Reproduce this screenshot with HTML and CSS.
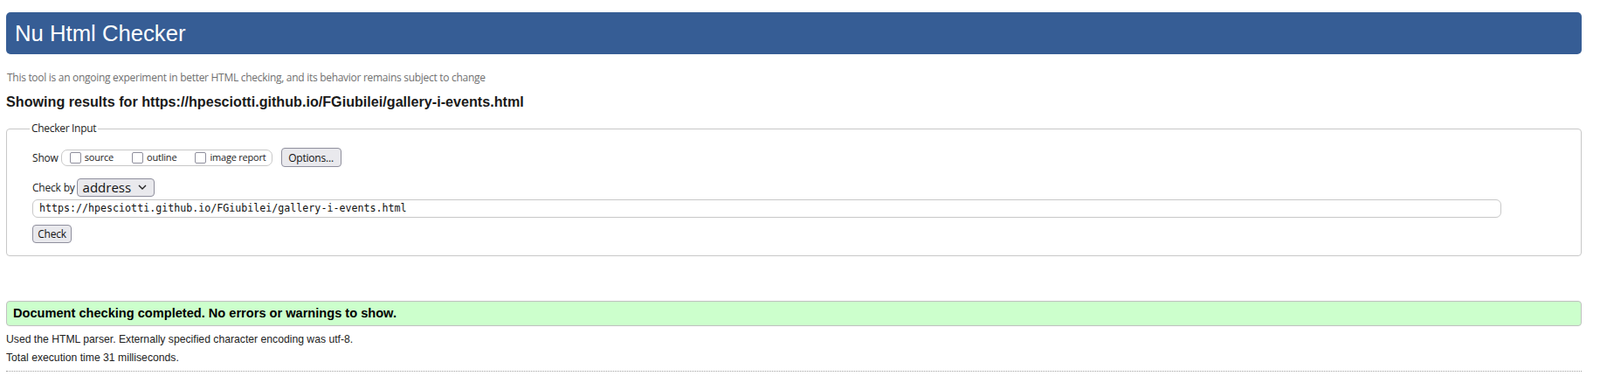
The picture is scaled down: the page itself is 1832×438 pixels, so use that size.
FILE: index.html
```html
<!DOCTYPE html>
<html lang="en">
<head>
<meta charset="utf-8">
<title>Nu Html Checker</title>
<link rel="stylesheet" href="styles.css">
</head>
<body>
<div class="page">
  <h1 class="banner">Nu Html Checker</h1>
  <p class="note">This tool is an ongoing experiment in better HTML checking, and its behavior remains subject to change</p>
  <h2 class="results-title">Showing results for https://hpesciotti.github.io/FGiubilei/gallery-i-events.html</h2>
  <fieldset class="checker">
    <legend class="legend">Checker Input</legend>
    <div class="row show-row">
      <span class="lbl">Show</span>
      <div class="opts">
        <label class="opt"><span class="cb"></span><span class="opt-text">source</span></label>
        <label class="opt"><span class="cb"></span><span class="opt-text">outline</span></label>
        <label class="opt"><span class="cb"></span><span class="opt-text">image report</span></label>
      </div>
      <span class="btn options-btn">Options...</span>
    </div>
    <div class="row by-row">
      <span class="lbl">Check by</span>
      <span class="select">address<svg class="chev" width="10" height="6" viewBox="0 0 10 6"><path d="M1 1 L5 5 L9 1" fill="none" stroke="#222" stroke-width="1.4"/></svg></span>
    </div>
    <div class="url">https://hpesciotti.github.io/FGiubilei/gallery-i-events.html</div>
    <span class="btn check-btn">Check</span>
  </fieldset>
  <div class="success">Document checking completed. No errors or warnings to show.</div>
  <p class="info">Used the HTML parser. Externally specified character encoding was utf-8.</p>
  <p class="info">Total execution time 31 milliseconds.</p>
  <div class="dots"></div>
</div>
</body>
</html>
```

FILE: styles.css
```css
* { box-sizing: border-box; }

body {
  margin: 0;
  background: #fff;
  color: #222;
  font-family: "Open Sans", "Noto Sans", sans-serif;
}

.page {
  margin-left: 7px;
  width: 1804px;
  padding-top: 14px;
}

.banner {
  margin: 0;
  height: 48px;
  padding-left: 10px;
  background: #365d95;
  color: #fff;
  font-family: "Liberation Sans", Arial, sans-serif;
  font-weight: 400;
  font-size: 25.7px;
  line-height: 48px;
  border-radius: 5px;
}

.note {
  margin: 19px 0 0 1px;
  font-size: 12px;
  line-height: 16px;
  color: #707070;
  letter-spacing: -0.29px;
}

.results-title {
  margin: 9px 0 0 0;
  font-family: "Liberation Sans", Arial, sans-serif;
  font-weight: 700;
  font-size: 16.15px;
  line-height: 20px;
  color: #1a1a1a;
}

.checker {
  margin: 13px 0 0 0;
  padding: 14px 29px 14px 29px;
  border: 1px solid #c8c8c8;
  border-radius: 4px;
  min-width: 0;
}

.legend {
  margin-left: -3px;
  padding: 0 2px;
  font-size: 12px;
  line-height: 16px;
  color: #222;
  letter-spacing: -0.3px;
}

.row {
  display: flex;
  align-items: center;
}

.lbl {
  font-size: 12px;
  color: #222;
  letter-spacing: -0.2px;
}

.show-row {
  height: 22px;
}

.opts {
  display: flex;
  align-items: center;
  height: 19px;
  margin-left: 3px;
  padding: 0 6px 0 9px;
  border: 1px solid #c8c8c8;
  border-radius: 7px;
}

.opt {
  display: flex;
  align-items: center;
  margin-right: 21px;
}

.opt:last-child {
  margin-right: 0;
}

.cb {
  width: 13px;
  height: 13px;
  border: 1px solid #8f8f9d;
  border-radius: 2px;
  background: #fff;
  margin-right: 4px;
}

.opt-text {
  font-size: 11px;
  line-height: 14px;
  color: #222;
  letter-spacing: -0.2px;
}

.btn {
  display: inline-flex;
  align-items: center;
  justify-content: center;
  background: #e9e9ed;
  border: 1px solid #8f8f9d;
  border-radius: 4px;
  font-size: 12px;
  color: #111;
  letter-spacing: -0.2px;
}

.options-btn {
  margin-left: 10px;
  width: 69px;
  height: 22px;
}

.by-row {
  margin-top: 12.5px;
  height: 21px;
}

.select {
  display: inline-flex;
  align-items: center;
  justify-content: space-between;
  margin-left: 2px;
  width: 89px;
  height: 21px;
  padding: 0 8px 0 6px;
  background: #e9e9ed;
  border: 1px solid #8f8f9d;
  border-radius: 4px;
  font-size: 15px;
  color: #111;
}

.chev {
  display: block;
}

.url {
  margin-top: 3.5px;
  width: 1682px;
  height: 21px;
  padding-left: 7px;
  border: 1px solid #c8c8c8;
  border-radius: 6px;
  font-family: "DejaVu Sans Mono", "Liberation Mono", monospace;
  font-size: 11.65px;
  line-height: 19px;
  color: #111;
}

.check-btn {
  margin-top: 7.5px;
  width: 45px;
  height: 21px;
}

.success {
  margin-top: 51.5px;
  height: 29px;
  padding-left: 7px;
  background: #ccffcc;
  border: 1px solid #c0c0c0;
  border-radius: 4px;
  font-family: "Liberation Sans", Arial, sans-serif;
  font-weight: 700;
  font-size: 14.6px;
  line-height: 27px;
  color: #000;
}

.info {
  margin: 0;
  font-family: "Liberation Sans", Arial, sans-serif;
  font-size: 12.2px;
  line-height: 21.5px;
  color: #222;
}

.success + .info {
  margin-top: 4.5px;
}

.dots {
  margin-top: 3px;
  border-top: 1px dotted #a0a0a0;
}
```
